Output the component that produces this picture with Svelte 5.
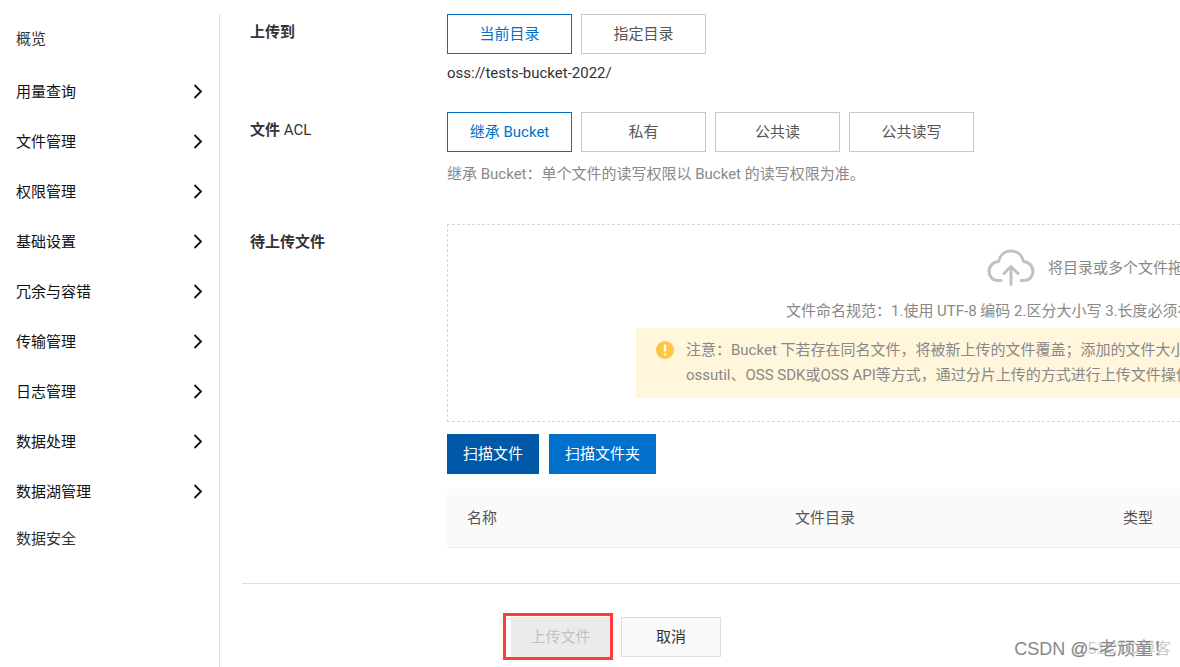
<script lang="ts">
  const groups = [
    '用量查询',
    '文件管理',
    '权限管理',
    '基础设置',
    '冗余与容错',
    '传输管理',
    '日志管理',
    '数据处理',
    '数据湖管理',
  ]
  const targets = ['当前目录', '指定目录']
  const acls = ['继承 Bucket', '私有', '公共读', '公共读写']
  const columns = ['名称', '文件目录', '类型']

  let target = $state(targets[0])
  let acl = $state(acls[0])
</script>

<div class="page">
  <nav class="sidebar">
    <a class="nav-link nav-link--first" href="#overview">概览</a>
    {#each groups as group}
      <button class="nav-group" type="button">
        {group}
        <svg width="12" height="16" viewBox="0 0 12 16" fill="none" aria-hidden="true">
          <path d="M2.500 1L9 7.500 2.500 14" stroke="currentColor" stroke-width="1.8" />
        </svg>
      </button>
    {/each}
    <a class="nav-link" href="#security">数据安全</a>
  </nav>

  <main class="main">
    <form class="form" onsubmit={(e) => e.preventDefault()}>
      <span class="label" id="target-label">上传到</span>
      <div class="field">
        <div class="options" role="group" aria-labelledby="target-label">
          {#each targets as item}
            <button
              class="option"
              class:option--active={target === item}
              type="button"
              onclick={() => (target = item)}>{item}</button>
          {/each}
        </div>
        <p class="path">oss://tests-bucket-2022/</p>
      </div>

      <span class="label" id="acl-label">文件 <span class="latin">ACL</span></span>
      <div class="field">
        <div class="options" role="group" aria-labelledby="acl-label">
          {#each acls as item}
            <button
              class="option"
              class:option--active={acl === item}
              type="button"
              onclick={() => (acl = item)}>{item}</button>
          {/each}
        </div>
        <p class="hint">继承 Bucket：单个文件的读写权限以 Bucket 的读写权限为准。</p>
      </div>

      <span class="label label--files">待上传文件</span>
      <div class="field field--files">
        <div class="dropzone">
          <div class="drop-title">
            <svg width="48" height="38" viewBox="0 0 48 38" fill="none" aria-hidden="true">
              <g stroke="#c1c1c1" stroke-width="3" stroke-linecap="round" stroke-linejoin="round">
                <path d="M14 31.500H11C5.500 31.500 2 27 2 22.500c0-5.500 4-9.500 9.500-10C13 6 18 2 24 2S35 6 36.500 12.500C42 13 46 17 46 22.500c0 4.500-3.500 9-9 9h-3" />
                <path d="M24 35.500V18M17 24.500l7-7 7 7" />
              </g>
            </svg>
            <span>将目录或多个文件拖</span>
          </div>
          <p class="drop-rule">文件命名规范：1.使用 UTF-8 编码 2.区分大小写 3.长度必须在</p>
          <div class="notice">
            <svg width="18" height="18" viewBox="0 0 18 18" aria-hidden="true">
              <circle cx="9" cy="9" r="9" fill="#ffc440" />
              <path d="M7.800 3.500h2.400v7H7.800zM7.800 12.200h2.400v2.400H7.800z" fill="#fff" />
            </svg>
            <p>
              注意：Bucket 下若存在同名文件，将被新上传的文件覆盖；添加的文件大小<br />
              ossutil、OSS SDK或OSS API等方式，通过分片上传的方式进行上传文件操作
            </p>
          </div>
        </div>
        <div class="scan">
          <button class="primary primary--pressed" type="button">扫描文件</button>
          <button class="primary" type="button">扫描文件夹</button>
        </div>
        <table class="files">
          <thead>
            <tr>
              {#each columns as column}
                <th scope="col">{column}</th>
              {/each}
            </tr>
          </thead>
        </table>
      </div>
    </form>

    <footer class="footer">
      <div class="highlight">
        <button class="submit" type="button" disabled>上传文件</button>
      </div>
      <button class="cancel" type="button">取消</button>
    </footer>
  </main>

  <div class="watermark">
    <span class="mark mark--site">@51CTO博客</span>
    <span class="mark">CSDN @~老顽童！</span>
  </div>
</div>

<style>
  :global(body) {
    background: #fff;
  }

  .page {
    position: relative;
    display: flex;
    box-sizing: border-box;
    min-height: 100vh;
    padding-top: 14px;
    overflow: hidden;
    font-family: Roboto, 'Noto Sans CJK SC', sans-serif;
    font-size: 15px;
    line-height: 24px;
    color: #333;
  }

  button {
    box-sizing: border-box;
    font: inherit;
    cursor: pointer;
  }

  p {
    margin: 0;
  }

  .sidebar {
    display: flex;
    flex-direction: column;
    flex: 0 0 219px;
    padding-top: 3px;
    border-right: 1px solid #dedede;
  }

  .nav-link {
    padding: 10px 16px;
    color: #333;
    text-decoration: none;
  }
  .nav-link--first {
    margin-bottom: 6px;
  }

  .nav-group {
    display: flex;
    align-items: center;
    justify-content: space-between;
    height: 50px;
    padding: 0 15px 0 16px;
    border: none;
    background: none;
    color: #111;
  }

  .main {
    flex: 1;
    min-width: 0;
    padding-left: 22px;
  }

  .form {
    display: grid;
    grid-template-columns: 197px minmax(0, 1fr);
    padding-left: 8px;
    padding-bottom: 35px;
    border-bottom: 1px solid #dedede;
  }

  .label {
    padding-top: 6px;
    font-weight: 700;
  }
  .label--files {
    padding-top: 44px;
  }
  .latin {
    font-weight: 400;
  }

  .options {
    display: flex;
    gap: 9px;
  }
  .option {
    width: 125px;
    height: 40px;
    padding: 0;
    border: 1px solid #c8c8c8;
    background: #fff;
    color: #555;
  }
  .option--active {
    border-color: #0070cc;
    color: #0070cc;
  }

  .path {
    margin: 7px 0 27px;
  }
  .hint {
    margin-top: 10px;
    color: #888;
  }
  .field--files {
    padding-top: 38px;
  }

  .dropzone {
    box-sizing: border-box;
    height: 198px;
    padding-top: 24px;
    border: 1px dashed #d8d8d8;
    border-right: none;
    overflow: hidden;
    white-space: nowrap;
    color: #888;
  }
  .drop-title {
    display: flex;
    align-items: center;
    gap: 13px;
    padding-left: 539px;
  }
  .drop-title svg,
  .notice svg {
    flex: none;
  }
  .drop-rule {
    padding: 12px 0 5px 338px;
  }
  .notice {
    display: flex;
    gap: 12px;
    margin-left: 188px;
    padding: 10px 0 10px 20px;
    background: #fff6dc;
    line-height: 25px;
  }
  .notice svg {
    margin-top: 3px;
  }

  .scan {
    display: flex;
    gap: 10px;
    margin: 12px 0 15px;
  }
  .primary {
    height: 40px;
    padding: 0 16px;
    border: none;
    background: #0070cc;
    color: #fff;
  }
  .primary--pressed {
    background: #0059a6;
  }

  .files {
    width: 100%;
    border-collapse: collapse;
    table-layout: fixed;
    background: #fafafa;
  }
  .files th {
    height: 58px;
    padding: 0 20px;
    border-bottom: 1px solid #ebebeb;
    font-weight: 400;
    text-align: left;
    color: #555;
  }
  .files th:not(:last-child) {
    width: 288px;
  }

  .footer {
    display: flex;
    align-items: center;
    gap: 8px;
    padding: 29px 0 7px 261px;
  }
  .highlight {
    border: 3px solid #ff3b3b;
    padding: 1px 0 0 5px;
  }
  .submit {
    display: block;
    width: 99px;
    height: 40px;
    padding: 0;
    border: none;
    background: #ebebeb;
    color: #c1c1c1;
  }
  .cancel {
    width: 100px;
    height: 40px;
    padding: 0;
    border: 1px solid #dedede;
    background: #fafafa;
    color: #333;
  }

  .watermark {
    position: absolute;
    right: 9px;
    bottom: 6px;
    display: grid;
    justify-items: end;
    font-family: 'Liberation Sans', 'Noto Sans CJK SC', sans-serif;
    pointer-events: none;
  }
  .mark {
    grid-area: 1 / 1;
    font-size: 18px;
    white-space: nowrap;
    color: #888;
  }
  .mark--site {
    font-size: 16px;
    color: #ccc;
  }
</style>
